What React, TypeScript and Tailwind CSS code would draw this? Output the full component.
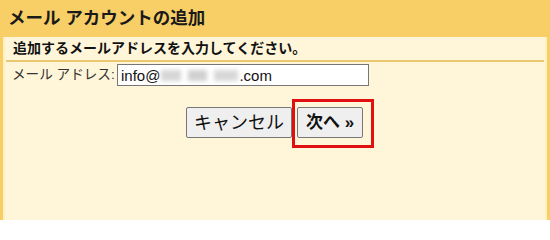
export default function App() {
  const font = "font-['Liberation_Sans','Noto_Sans_CJK_JP',sans-serif]";
  return (
    <div className={`relative flex h-[220px] w-[550px] flex-col bg-[#f8cf66] text-[#222] ${font}`}>
      <div className="flex h-[37px] shrink-0 items-center pl-[8px] pt-[1px] text-[17.5px] font-bold leading-none text-[#1a1a1a]">
        メール アカウントの追加
      </div>

      <div className="mx-[3px] flex-1 border-x-2 border-[#fff0c0] bg-[#fff6d9]">
        <div className="mx-[1px] border-b-2 border-[#e9c870] pb-[3px] pl-[7px] pt-[2px] text-[14px] font-bold leading-[18px] text-[#111]">
          追加するメールアドレスを入力してください。
        </div>

        <div className="mt-[2px] flex items-center pl-[7px]">
          <span className="w-[105px] shrink-0 whitespace-nowrap text-[13.6px] leading-[22px] text-[#333]">
            メール アドレス:
          </span>
          <div className="flex h-[22px] w-[252px] items-center border border-[#777] bg-white pl-[3px] text-[15px] leading-none text-[#111]">
            <span>info@</span>
            <span className="mx-[1px] flex h-[14px] w-[77px] items-center gap-[7px] blur-[2px]">
              <span className="h-[11px] w-[20px] bg-[#d6d6d6]" />
              <span className="h-[11px] w-[19px] bg-[#d0d0d0]" />
              <span className="h-[11px] w-[24px] bg-[#d8d8d8]" />
            </span>
            <span>.com</span>
          </div>
        </div>

        <div className="mt-[21px] flex justify-center gap-[5px] pr-[1px]">
          <button className="h-[31px] w-[106px] rounded-[2px] border border-[#777] bg-[#efefef] text-[18px] leading-none text-[#111]">
            キャンセル
          </button>
          <button className="h-[31px] w-[66px] rounded-[2px] border border-[#777] bg-[#efefef] text-[17px] font-bold leading-none text-[#111]">
            次へ »
          </button>
        </div>
      </div>

      <div className="pointer-events-none absolute left-[292px] top-[99px] h-[49px] w-[82px] border-[3px] border-[#e01010]" />
    </div>
  );
}
